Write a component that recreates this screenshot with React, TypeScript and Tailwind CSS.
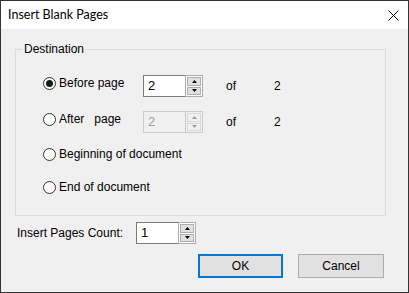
import React from "react";

function Radio({ checked }: { checked?: boolean }) {
  return (
    <span className="w-[13px] h-[13px] rounded-full border border-[#333333] bg-white flex items-center justify-center shrink-0">
      {checked && <span className="w-[7px] h-[7px] rounded-full bg-[#1a1a1a]" />}
    </span>
  );
}

function Tri({ up, disabled }: { up?: boolean; disabled?: boolean }) {
  return (
    <svg width="5" height="3" viewBox="0 0 5 3">
      <polygon
        points={up ? "0,3 5,3 2.5,0" : "0,0 5,0 2.5,3"}
        fill={disabled ? "#a0a0a0" : "#000000"}
      />
    </svg>
  );
}

function Spin({ value, disabled }: { value: string; disabled?: boolean }) {
  return (
    <div className={disabled ? "flex h-[22px] w-[60px] bg-[#f0f0f0]" : "flex h-[22px] w-[60px] bg-white"}>
      <div
        className={
          disabled
            ? "flex-1 border-y border-l border-[#cccccc] text-[#a0a0a0] flex items-center pl-[4px] text-[13px]"
            : "flex-1 border-y border-l border-[#7a7a7a] text-black flex items-center pl-[4px] text-[13px]"
        }
      >
        {value}
      </div>
      <div
        className={
          disabled
            ? "w-[18px] border border-[#cccccc] flex flex-col p-[1px] gap-[1px]"
            : "w-[18px] border border-[#adadad] flex flex-col p-[1px] gap-[1px]"
        }
      >
        <div
          className={
            disabled
              ? "flex-1 border border-[#d9d9d9] bg-[#f0f0f0] flex items-center justify-center"
              : "flex-1 border border-[#adadad] bg-[#e1e1e1] flex items-center justify-center"
          }
        >
          <Tri up disabled={disabled} />
        </div>
        <div
          className={
            disabled
              ? "flex-1 border border-[#d9d9d9] bg-[#f0f0f0] flex items-center justify-center"
              : "flex-1 border border-[#adadad] bg-[#e1e1e1] flex items-center justify-center"
          }
        >
          <Tri disabled={disabled} />
        </div>
      </div>
    </div>
  );
}

export default function App() {
  return (
    <div className="w-[409px] h-[293px] border border-[#333333] flex flex-col font-['Liberation_Sans',Arial,sans-serif] text-[12px] leading-[14px] text-black overflow-hidden">
      <div className="h-[28px] bg-white flex items-center justify-between pl-[7px] pr-[9px] shrink-0">
        <span className="font-['Lato',sans-serif] text-[12.5px]">Insert Blank Pages</span>
        <svg width="11" height="11" viewBox="0 0 11 11">
          <path d="M0.5 0.5 L10.5 10.5 M10.5 0.5 L0.5 10.5" stroke="#000" strokeWidth="1" />
        </svg>
      </div>
      <div className="flex-1 bg-[#f0f0f0] pt-[13px] pl-[14px] flex flex-col">
        <fieldset className="w-[371px] h-[174px] border border-[#dcdcdc]">
          <legend className="ml-[6px] px-[2px] leading-[14px]">Destination</legend>
          <div className="flex flex-col pl-[27px]">
            <div className="flex items-start h-[22px] mt-[19px]">
              <div className="w-[100px] h-[14px] mt-[1px] flex items-center gap-[3px]">
                <Radio checked />
                <span>Before page</span>
              </div>
              <Spin value="2" />
              <div className="h-[22px] flex items-center ml-[23px] w-[48px]">of</div>
              <div className="h-[22px] flex items-center">2</div>
            </div>
            <div className="flex items-start h-[22px] mt-[14px]">
              <div className="w-[100px] h-[14px] mt-[1px] flex items-center gap-[3px]">
                <Radio />
                <span className="whitespace-pre">After   page</span>
              </div>
              <Spin value="2" disabled />
              <div className="h-[22px] flex items-center ml-[23px] w-[48px]">of</div>
              <div className="h-[22px] flex items-center">2</div>
            </div>
            <div className="h-[14px] mt-[14px] flex items-center gap-[3px]">
              <Radio />
              <span>Beginning of document</span>
            </div>
            <div className="h-[14px] mt-[19px] flex items-center gap-[3px]">
              <Radio />
              <span>End of document</span>
            </div>
          </div>
        </fieldset>
        <div className="flex items-center mt-[6px] ml-[2px]">
          <div className="w-[119px]">Insert Pages Count:</div>
          <Spin value="1" />
        </div>
        <div className="flex gap-[15px] ml-[183px] mt-[10px]">
          <div className="w-[85px] h-[24px] border-2 border-[#0078d7] bg-[#e1e1e1] flex items-center justify-center">OK</div>
          <div className="w-[86px] h-[24px] border border-[#adadad] bg-[#e1e1e1] flex items-center justify-center">Cancel</div>
        </div>
      </div>
    </div>
  );
}
